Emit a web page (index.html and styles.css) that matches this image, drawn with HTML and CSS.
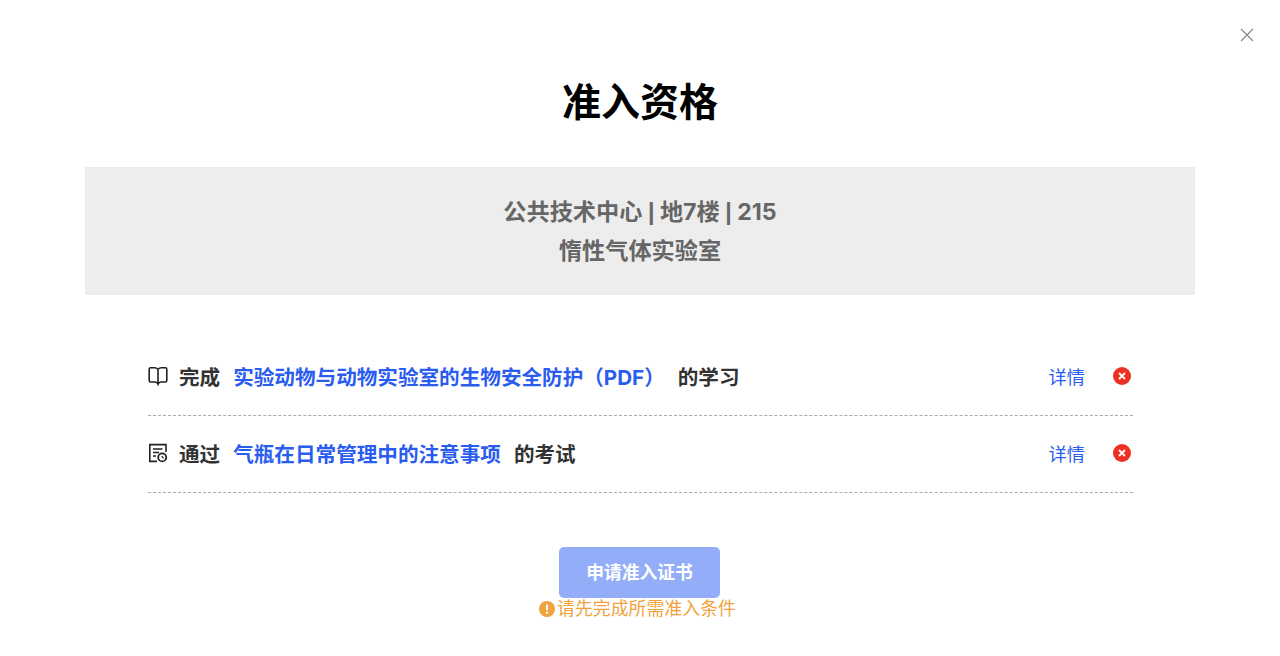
FILE: index.html
```html
<!DOCTYPE html>
<html lang="zh-CN">
<head>
	<meta charset="UTF-8">
	<title>准入资格</title>
	<link rel="stylesheet" href="styles.css">
</head>
<body>
	<div class="dialog">
		<svg class="close" width="14" height="14" viewBox="0 0 14 14"><path d="M1 1L13 13M13 1L1 13" stroke="#8c8c8c" stroke-width="1.3" fill="none"/></svg>
		<h1 class="title">准入资格</h1>
		<div class="place">
			<p>公共技术中心 <span class="sep">|</span> 地7楼 <span class="sep">|</span> 215</p>
			<p>惰性气体实验室</p>
		</div>
		<ul class="conds">
			<li class="cond">
				<svg class="cond-icon" width="20" height="20" viewBox="0 0 20 20" fill="none" stroke="#222" stroke-width="1.6"><path d="M10 3.2C9 2.2 8 1.8 6.5 1.8H2.6C1.6 1.8 1.2 2.3 1.2 3.2V14.6C1.2 15.5 1.6 16 2.6 16H7C8.6 16 9.4 16.6 10 18.2C10.6 16.6 11.4 16 13 16H17.4C18.4 16 18.8 15.5 18.8 14.6V3.2C18.8 2.3 18.4 1.8 17.4 1.8H13.5C12 1.8 11 2.2 10 3.2ZM10 3.2V18.2"/></svg>
				<span class="cond-text">完成</span>
				<a class="cond-link" href="#">实验动物与动物实验室的生物安全防护（PDF）</a>
				<span class="cond-text">的学习</span>
				<a class="more" href="#">详情</a>
				<svg class="state" width="18" height="18" viewBox="0 0 18 18"><circle cx="9" cy="9" r="9" fill="#ee2f24"/><path d="M6 6L12 12M12 6L6 12" stroke="#fff" stroke-width="1.8"/></svg>
			</li>
			<li class="cond">
				<svg class="cond-icon" width="20" height="20" viewBox="0 0 20 20" fill="none" stroke="#222" stroke-width="1.6"><path d="M9 18.4H1.8V1.6H18V9M5 6H14.5M5 9.5H11M5 13H8"/><circle cx="14.2" cy="14.4" r="4" stroke-width="1.8"/><path d="M13.6 12.8L15.6 15.4" stroke-width="1.2"/></svg>
				<span class="cond-text">通过</span>
				<a class="cond-link" href="#">气瓶在日常管理中的注意事项</a>
				<span class="cond-text">的考试</span>
				<a class="more" href="#">详情</a>
				<svg class="state" width="18" height="18" viewBox="0 0 18 18"><circle cx="9" cy="9" r="9" fill="#ee2f24"/><path d="M6 6L12 12M12 6L6 12" stroke="#fff" stroke-width="1.8"/></svg>
			</li>
		</ul>
		<div class="apply">
			<button class="apply-btn" type="button">申请准入证书</button>
			<p class="hint"><svg width="16" height="16" viewBox="0 0 16 16"><circle cx="8" cy="8" r="8" fill="#f0a33c"/><path d="M8 3.5V9" stroke="#fff" stroke-width="2"/><circle cx="8" cy="11.6" r="1.2" fill="#fff"/></svg>请先完成所需准入条件</p>
		</div>
	</div>
</body>
</html>
```

FILE: styles.css
```css
*{ margin: 0; padding: 0; box-sizing: border-box;}
html, body{ height: 100%; background: #fff;}
body{ font-family: "Inter", "Noto Sans CJK SC", sans-serif; overflow: hidden;}
li{ list-style: none;}
a{ text-decoration: none;}
.dialog{ position: relative; height: 656px; padding: 72px 85px 0;}
.close{ position: absolute; top: 28px; right: 26px;}
.title{ height: 60px; font-size: 39px; line-height: 60px; font-weight: 700; color: #000; text-align: center;}
.place{ margin-top: 35px; height: 128px; padding-top: 26px; background: #ededed; color: #666; text-align: center; font-size: 23.2px; line-height: 39px; font-weight: 700;}
.sep{ font-family: "Liberation Sans", sans-serif;}
.conds{ margin: 44px 62px 0 63px;}
.cond{ display: flex; align-items: center; height: 77px; padding-bottom: 3px; border-bottom: 1px dashed #aaa; font-size: 20.6px;}
.cond-icon{ margin-right: 11px;}
.cond-text{ color: #333; font-weight: 700;}
.cond-link{ margin: 0 13px 0 13px; color: #2a5cf0; font-weight: 700;}
.more{ margin-left: auto; color: #2a5cf0; font-size: 18.2px;}
.state{ margin-left: 28px; margin-right: 2px;}
.apply{ margin-top: 54px; padding-right: 1px; display: flex; flex-direction: column; align-items: center;}
.apply-btn{ width: 161px; height: 51px; padding-bottom: 3px; border: 0; border-radius: 5px; background: #94adf8; color: #fff; font-family: inherit; font-size: 17.8px; font-weight: 700;}
.hint{ display: flex; align-items: center; margin-right: 4px; height: 22px; color: #f0a33c; font-size: 17.9px; line-height: 22px;}
.hint svg{ margin-right: 2px;}
```
